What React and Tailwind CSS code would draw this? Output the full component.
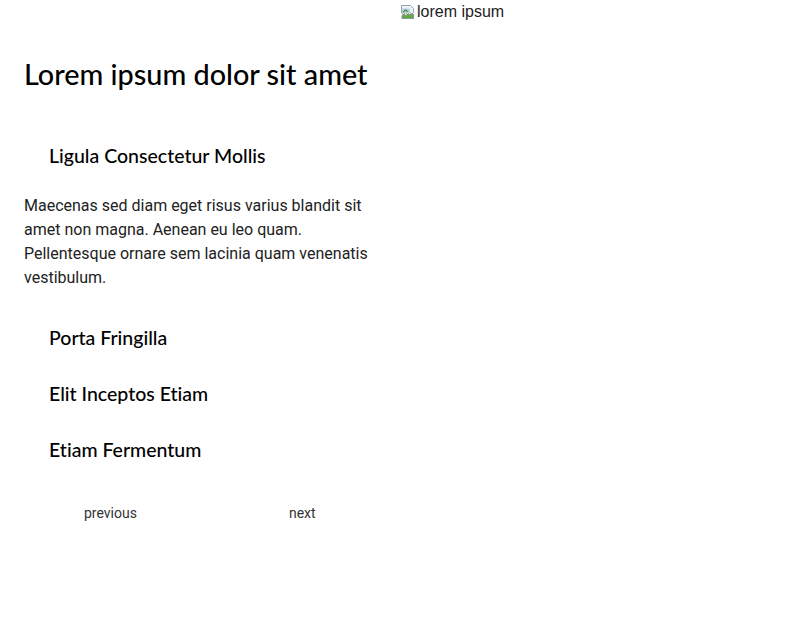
const sections = [
  {
    title: 'Ligula Consectetur Mollis',
    body: 'Maecenas sed diam eget risus varius blandit sit amet non magna. Aenean eu leo quam. Pellentesque ornare sem lacinia quam venenatis vestibulum.',
  },
  { title: 'Porta Fringilla' },
  { title: 'Elit Inceptos Etiam' },
  { title: 'Etiam Fermentum' },
];

const BrokenImage = () => (
  <svg width="16" height="16" viewBox="0 0 16 16" className="shrink-0">
    <path d="M1.5 1.5h9l3 3v4l-2 1.5-2-1.5-2 2-2-1.5-2 1.5-2-1.5z" fill="#eef3fa" stroke="#9aa3ad" />
    <path d="M2 6.5h8" stroke="#7fb2e6" strokeWidth="4" opacity="0.5" />
    <path d="M2 11.5l2-1.5 2 1.5 2-2 2 1.5 2-1.5 1.5 1v4h-11.5z" fill="#5fae3c" stroke="#8a939c" />
    <path d="M3 8.5l2.5-2.5 2.5 2" fill="none" stroke="#4f9a2e" strokeWidth="1.5" />
  </svg>
);

export default function App() {
  return (
    <div className="flex w-[800px] h-[628px] bg-white text-black">
      <div className="w-[400px] px-6 pt-[56px]">
        <h1 className="text-[28.8px] leading-[36px] font-medium font-['Lato',sans-serif] [font-variant-ligatures:none]">
          Lorem ipsum dolor sit amet
        </h1>
        <div className="mt-[36px]">
          {sections.map((s) => (
            <div key={s.title}>
              <button type="button" className="block w-full text-left pl-[25px] py-[14px] text-[19.5px] leading-[28px] font-medium font-['Lato',sans-serif] [font-variant-ligatures:none]">
                {s.title}
              </button>
              {s.body && (
                <p className="mt-[10px] mb-[20px] text-[16px] leading-[24px] text-[#222] font-['Roboto',sans-serif]">
                  {s.body}
                </p>
              )}
            </div>
          ))}
        </div>
        <div className="flex mt-[25px] text-[14px] leading-[20px] text-[#333] font-['Roboto',sans-serif]">
          <button type="button" className="ml-[60px]">previous</button>
          <button type="button" className="ml-[152px]">next</button>
        </div>
      </div>
      <div className="w-[400px]">
        <div className="flex items-center h-[24px] text-[16px] text-[#222] font-['Liberation_Sans',sans-serif]">
          <BrokenImage />
          <span className="ml-px">lorem ipsum</span>
        </div>
      </div>
    </div>
  );
}
